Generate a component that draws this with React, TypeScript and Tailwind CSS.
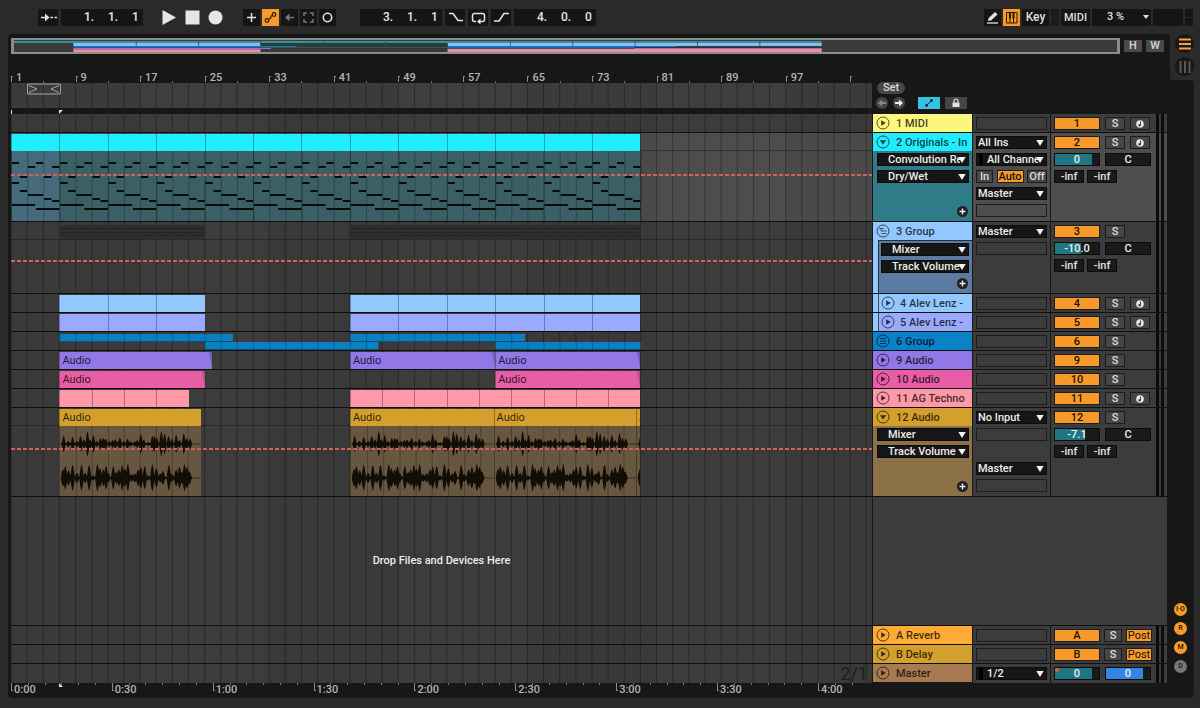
import { useState } from "react";
import type { ReactNode } from "react";
import clsx from "clsx";

const VIEW_BARS = 106.7;
const bar = (value: number) => `${(value / VIEW_BARS) * 100}%`;

type Clip = { start: number; end: number; label?: string; fade?: boolean };

type Track = {
  id: string;
  name: string;
  color: string;
  body?: string;
  icon: "play" | "down" | "group" | "stack";
  height?: string;
  child?: boolean;
  clips?: Clip[];
  devices?: string[];
  io?: ReactNode;
  arm?: boolean;
  volume?: { value: string; fill: number };
  automation?: string;
  selected?: boolean;
  content?: ReactNode;
};

/* ---------- shared pieces ---------- */

function Arrow() {
  return (
    <svg className="pointer-events-none absolute top-[3px] right-[2px] h-[6px] w-2" viewBox="0 0 8 6">
      <path d="M0.3 0h7.4L4 6z" fill="#f2f2f2" />
    </svg>
  );
}

function Dropdown({ value, label, indent, marks }: { value: string; label: string; indent?: boolean; marks?: boolean }) {
  return (
    <div className="relative h-[13px] border border-[#0c0c0c] bg-[#161616] pr-2">
      <select
        aria-label={label}
        className={clsx(
          "block h-[11px] w-full appearance-none overflow-hidden bg-transparent text-[11px] leading-[11px] font-medium text-[#ececec] outline-none",
          indent ? "pl-[10px]" : "pl-[1px]"
        )}
        defaultValue={value}
      >
        <option>{value}</option>
      </select>
      {marks ? <span className="absolute top-0 left-[2px] h-full w-1 bg-black" /> : null}
      <Arrow />
    </div>
  );
}

function Slot() {
  return <div className="h-[13px] border border-[#1c1c1c]" />;
}

function Gap() {
  return <div className="h-[13px]" />;
}

function GridLines() {
  const lines = Array.from({ length: 54 }, (_, i) => i * 2);
  return (
    <svg className="pointer-events-none absolute inset-0 h-full w-full">
      {[16, 48, 80].map((start) => (
        <rect key={start} x={bar(start)} width={bar(16)} height="100%" fill="#fff" opacity="0.02" />
      ))}
      {lines.map((line) => (
        <line key={line} x1={bar(line)} x2={bar(line)} y1="0" y2="100%" stroke="#000" strokeWidth="1" opacity="0.3" />
      ))}
    </svg>
  );
}

function TrackIcon({ kind }: { kind: Track["icon"] }) {
  return (
    <svg className="h-[14px] w-[14px] shrink-0" viewBox="0 0 14 14" fill="none" stroke="#000" strokeOpacity="0.65">
      <circle cx="7" cy="7" r="6" />
      {kind === "play" ? <path d="M5.2 4.2v5.6L9.8 7z" fill="#000" fillOpacity="0.75" stroke="none" /> : null}
      {kind === "down" ? <path d="M3.8 5.2h6.4L7 9.4z" fill="#000" fillOpacity="0.7" stroke="none" /> : null}
      {kind === "group" ? <path d="M3 4.5h5M5 7h5.5M5.5 9.5h5M5 4.5v2.5" strokeWidth="0.9" /> : null}
      {kind === "stack" ? <path d="M4 4.5h6M4 7h6M4 9.5h6" strokeWidth="0.9" /> : null}
    </svg>
  );
}

/* ---------- transport bar ---------- */

function Tool({ label, active, wide, children }: { label: string; active?: boolean; wide?: boolean; children: ReactNode }) {
  return (
    <button
      type="button"
      aria-label={label}
      className={clsx(
        "flex h-[17px] items-center justify-center",
        wide ? "w-5" : "w-[17px]",
        active ? "bg-[#f8992c] text-[#2a1a05]" : "bg-[#151515] text-[#e4e4e4]"
      )}
    >
      <svg className="h-[17px] w-[17px]" viewBox="0 0 17 17" fill="none" stroke="currentColor" strokeWidth="1.5">
        {children}
      </svg>
    </button>
  );
}

function Position({ label, values }: { label: string; values: string[] }) {
  return (
    <div className="flex h-[17px] w-[82px] items-center justify-end bg-[#151515] pr-[3px]">
      {values.map((value, i) => (
        <input
          key={i}
          aria-label={`${label} ${i + 1}`}
          className={clsx("bg-transparent text-xs font-medium text-[#e6e6e6] outline-none", i < 2 ? "w-6" : "w-2")}
          defaultValue={value}
        />
      ))}
    </div>
  );
}

function Transport() {
  return (
    <header className="flex h-[34px] items-center pr-[7px] pl-[38px]">
      <div className="flex gap-[3px]">
        <Tool label="Follow" wide>
          <path d="M1 8.5h6M10.500 8.5h2.500M14.500 8.5h2.500" />
          <path d="M5 4.500v8l4.500-4z" fill="currentColor" stroke="none" />
        </Tool>
        <Position label="Position" values={["1.", "1.", "1"]} />
      </div>
      <div className="ml-[19px] flex items-center gap-2 text-[#e6e6e6]">
        <button type="button" aria-label="Play">
          <svg className="h-[15px] w-[15px]" viewBox="0 0 15 15"><path d="M0.500 0v15L14 7.500z" fill="currentColor" /></svg>
        </button>
        <button type="button" aria-label="Stop">
          <svg className="h-[15px] w-[15px]" viewBox="0 0 15 15"><path d="M0.500 0.500h14v14h-14z" fill="currentColor" /></svg>
        </button>
        <button type="button" aria-label="Record">
          <svg className="h-[15px] w-[15px]" viewBox="0 0 15 15"><circle cx="7.500" cy="7.500" r="7" fill="currentColor" /></svg>
        </button>
      </div>
      <div className="ml-5 flex gap-[2px]">
        <Tool label="Overdub"><path d="M8.500 4v9M4 8.500h9" /></Tool>
        <Tool label="Automation arm" active>
          <g strokeWidth="1.200">
            <circle cx="5" cy="11.500" r="1.800" />
            <circle cx="12" cy="5.500" r="1.800" />
            <path d="M6.500 10.500C8 9 9 10 8.800 8.500S9.500 6.500 10.500 6.500" />
          </g>
        </Tool>
        <Tool label="Re-enable automation">
          <g stroke="#777"><path d="M7 8.500h6" /><path d="M8.500 4.500v8L4 8.500z" fill="#777" stroke="none" /></g>
        </Tool>
        <Tool label="Capture">
          <path d="M4 7V4h3M10 4h3v3M13 10v3h-3M7 13H4v-3" stroke="#777" />
        </Tool>
        <Tool label="Session record"><circle cx="8.500" cy="8.500" r="4.200" /></Tool>
      </div>
      <div className="ml-6 flex gap-[3px]">
        <Position label="Loop start" values={["3.", "1.", "1"]} />
        <Tool label="Punch in" wide><path d="M2 4.500h4l5 7h5" strokeLinejoin="round" /></Tool>
        <Tool label="Loop" wide>
          <path d="M6 12.500H4.500a2 2 0 0 1-2-2v-4a2 2 0 0 1 2-2h8a2 2 0 0 1 2 2v4a2 2 0 0 1-2 2H10" />
          <path d="M10.500 9.500v6L7 12.500z" fill="currentColor" stroke="none" />
        </Tool>
        <Tool label="Punch out" wide><path d="M1 12h5l5-7.500h5" strokeLinejoin="round" /></Tool>
        <Position label="Loop length" values={["4.", "0.", "0"]} />
      </div>
      <div className="ml-auto flex gap-[2px] text-xs font-medium text-[#dedede]">
        <Tool label="Draw mode">
          <path d="M3 14h11" strokeWidth="1.300" />
          <path d="M4 12l0.700-3L11 3l2.500 2.500L7 11.500z" fill="currentColor" stroke="none" />
        </Tool>
        <Tool label="Computer keyboard" active>
          <g strokeWidth="1">
            <path d="M3.500 3.500h10.500v10.500H3.500zM7 9v5M10.500 9v5" />
            <path d="M7 3.500v6M10.500 3.500v6" strokeWidth="2" />
          </g>
        </Tool>
        <button type="button" className="h-[17px] w-[27px] bg-[#151515] text-center leading-[17px]">Key</button>
        <div className="flex w-2 flex-col gap-px"><span className="flex-1 bg-[#1b1b1b]" /><span className="flex-1 bg-[#1b1b1b]" /></div>
        <button type="button" className="h-[17px] w-[29px] bg-[#151515] text-center text-[11px] leading-[17px]">MIDI</button>
        <button type="button" className="flex h-[17px] w-[59px] items-center bg-[#151515] pl-[15px] text-[11px]">
          3 %
          <svg className="mr-[2px] ml-auto h-[4px] w-[6px]" viewBox="0 0 6 4"><path d="M0 0h6L3 4z" fill="#ddd" /></svg>
        </button>
        <div className="h-[17px] w-[30px] bg-[#151515]" />
        <div className="flex w-2 flex-col gap-px"><span className="flex-1 bg-[#151515]" /><span className="flex-1 bg-[#151515]" /></div>
      </div>
    </header>
  );
}

/* ---------- overview and rulers ---------- */

const overview = [
  { s: 0, e: 78, y: 2, h: 1, c: "#1f4a4e" },
  { s: 0, e: 78, y: 3, h: 2, c: "#3a9095" },
  { s: 6, e: 24, y: 5, h: 3, c: "#93b8f0" },
  { s: 42, e: 78, y: 5, h: 3, c: "#93b8f0" },
  { s: 24, e: 42, y: 5, h: 6, c: "#2b3b37" },
  { s: 24, e: 42, y: 9, h: 1, c: "#35584d" },
  { s: 6, e: 27.5, y: 8, h: 1, c: "#1478b8" },
  { s: 6, e: 24, y: 9, h: 1, c: "#155c9c" },
  { s: 42, e: 64, y: 8, h: 1, c: "#1478b8" },
  { s: 42, e: 60, y: 9, h: 1, c: "#1c62c0" },
  { s: 60, e: 78, y: 9, h: 1, c: "#143a60" },
  { s: 6, e: 25, y: 10, h: 1, c: "#8d6fe0" },
  { s: 42, e: 60, y: 10, h: 1, c: "#3450a8" },
  { s: 60, e: 78, y: 10, h: 1, c: "#a468d8" },
  { s: 6, e: 24, y: 11, h: 1, c: "#d068a8" },
  { s: 6, e: 24, y: 12, h: 2, c: "#f09080" },
  { s: 42, e: 78, y: 11, h: 3, c: "#ee918e" }
];

function Overview() {
  return (
    <div className="flex gap-1 pr-[3px]">
      <div className="relative h-4 flex-1 bg-[#3a3a3a]">
        <svg className="block h-4 w-full">
          {overview.map((o, i) => (
            <rect key={i} x={bar(o.s)} width={bar(o.e - o.s)} y={o.y} height={o.h} fill={o.c} />
          ))}
          {[12, 18, 24, 30, 36, 48, 54, 60, 66, 72].map((b) => (
            <rect key={b} x={bar(b)} width="1" y="3" height="5" fill="#245060" opacity="0.8" />
          ))}
        </svg>
        <div className="absolute inset-0 border-2 border-x-[3px] border-[#8b8b8b]" />
      </div>
      {["H", "W"].map((key) => (
        <button key={key} type="button" className="my-[2px] h-3 w-[18px] bg-[#4a4a4a] text-center text-[11px] leading-3 font-semibold text-[#cfcfcf]">
          {key}
        </button>
      ))}
    </div>
  );
}

function BeatRuler() {
  const ticks = Array.from({ length: 14 }, (_, i) => i * 8);
  return (
    <div className="relative h-[29px] overflow-hidden text-[11px] leading-[11px] font-medium text-[#b4b4b4]">
      {ticks.map((t) => (
        <div key={t} className="absolute bottom-0 flex h-[11px]" style={{ left: bar(t) }}>
          <span className="mt-1 mr-[3px] h-[6px] w-[2px] border-t border-l border-[#8a8a8a]" />
          {t < 100 ? t + 1 : null}
        </div>
      ))}
      {ticks.map((t) => (
        <span key={t} className="absolute bottom-0 h-[2px] w-px bg-[#777]" style={{ left: bar(t + 4) }} />
      ))}
    </div>
  );
}

function TimeRuler() {
  const marks = ["0:00", "0:30", "1:00", "1:30", "2:00", "2:30", "3:00", "3:30", "4:00"];
  const small = Array.from({ length: 51 }, (_, i) => (i * 12.5) / 6);
  return (
    <div className="relative h-[15px] overflow-hidden text-[11px] leading-[13px] font-medium text-[#b4b4b4]">
      {small.map((t) => (
        <span key={t} className="absolute top-0 h-[2px] w-px bg-[#777]" style={{ left: bar(t) }} />
      ))}
      {marks.map((mark, i) => (
        <div key={mark} className="absolute top-0 flex" style={{ left: bar(i * 12.5) }}>
          <span className="mr-px h-2 w-[2px] border-b border-l border-[#8a8a8a]" />
          {mark}
        </div>
      ))}
      <svg className="absolute top-0 h-1 w-1" style={{ left: bar(6) }} viewBox="0 0 4 4"><path d="M0 0l4 4H0z" fill="#cfe9dc" /></svg>
    </div>
  );
}

function RulerSection() {
  return (
    <div className="flex">
      <div className="min-w-0 flex-1">
        <BeatRuler />
        <div className="relative h-[25px] bg-[#3b3b3b]">
          <GridLines />
          <div className="absolute top-0 h-3" style={{ left: bar(2), width: bar(4.2) }}>
            <svg className="h-3 w-full" viewBox="0 0 34 12" preserveAspectRatio="none" fill="none" stroke="#a8a8a8">
              <path d="M0.500 1h33v10h-33zM2 2.500l8 3.500-8 3.500M32 2.500L24 6l8 3.500" />
            </svg>
          </div>
        </div>
        <div className="relative h-[6px]">
          <span className="absolute top-[2px] left-0 h-[4px] w-px bg-[#cfe9dc]" />
          <svg className="absolute top-[2px] h-1 w-1" style={{ left: bar(6) }} viewBox="0 0 4 4"><path d="M0 0h4L0 4z" fill="#cfe9dc" /></svg>
        </div>
      </div>
      <div className="w-[295px] pt-7 pl-1">
        <button type="button" className="ml-[1px] block h-3 w-7 rounded-full bg-[#464646] text-center text-[11px] leading-3 font-medium text-[#d8d8d8]">Set</button>
        <div className="mt-[3px] flex items-center gap-[5px]">
          <button type="button" aria-label="Previous locator" className="h-3 w-3 rounded-full bg-[#464646]">
            <svg className="h-3 w-3" viewBox="0 0 12 12"><path d="M2 6l4-3.500V5h4v2H6v2.500z" fill="#8a8a8a" /></svg>
          </button>
          <button type="button" aria-label="Next locator" className="h-3 w-3 rounded-full bg-[#464646]">
            <svg className="h-3 w-3" viewBox="0 0 12 12"><path d="M10 6L6 2.500V5H2v2h4v2.500z" fill="#f0f0f0" /></svg>
          </button>
          <button type="button" aria-label="Automation mode" className="ml-2 flex h-3 w-[22px] justify-center bg-[#37c3e0]">
            <svg className="h-3 w-3" viewBox="0 0 12 12" stroke="#07272e"><path d="M3 8.500l6-5" /><circle cx="3.500" cy="8.500" r="1" fill="#07272e" /><circle cx="8.500" cy="3.500" r="1" fill="#07272e" /></svg>
          </button>
          <button type="button" aria-label="Lock envelopes" className="flex h-3 w-[22px] justify-center bg-[#464646]">
            <svg className="h-3 w-3" viewBox="0 0 12 12"><path d="M2.500 5.500h7V10h-7z" fill="#e2e2e2" /><path d="M4 5.500V4a2 2 0 0 1 4 0v1.500" fill="none" stroke="#e2e2e2" strokeWidth="1.200" /></svg>
          </button>
        </div>
      </div>
    </div>
  );
}

/* ---------- clips ---------- */

const span = (from: number, to: number, step: number): Clip[] => {
  const out: Clip[] = [];
  for (let s = from; s < to; s += step) out.push({ start: s, end: Math.min(s + step, to) });
  return out;
};

function ClipBlocks({ clips, color }: { clips: Clip[]; color: string }) {
  return clips.map((clip) => (
    <div
      key={clip.start}
      className="absolute top-px h-[17px] overflow-hidden border-l border-black/30 pl-[2px] text-[11px] leading-[17px] text-black/80"
      style={{ left: bar(clip.start), width: bar(clip.end - clip.start), backgroundColor: color }}
    >
      {clip.label}
      {clip.fade ? (
        <svg className="absolute top-0 right-0 h-full w-[3px]" viewBox="0 0 3 17"><path d="M0 0h3v17z" fill="#000" opacity="0.2" /></svg>
      ) : null}
    </div>
  ));
}

// start bar, length in bars, y inside the clip body
const notes = [
  [0, 1, 11], [3, 1, 11], [2, 1, 15], [5, 1, 15], [1, 1, 25], [4, 1, 25], [0, 1, 31],
  [1, 1, 39], [2, 2, 43], [4, 1, 47], [5, 1, 49], [0, 3, 53], [3, 3, 57]
];

function MidiLane() {
  const loops = Array.from({ length: 13 }, (_, i) => i * 6);
  return (
    <svg className="absolute top-[18px] left-0 h-[70px] w-full">
      <rect width={bar(78)} height="70" fill="#3a5f65" />
      <rect width={bar(6)} height="70" fill="#456a7b" />
      {Array.from({ length: 40 }, (_, i) => (
        <rect key={i} x={bar(i * 2)} width="1" height="70" fill="#000" opacity={i % 3 ? 0.25 : 0.45} />
      ))}
      {loops.map((loop) =>
        notes.map(([start, length, y]) => (
          <rect key={`${loop}-${start}-${y}`} x={bar(loop + start + 0.1)} width={bar(length - 0.1)} y={y} height="2" fill="#060c0d" />
        ))
      )}
    </svg>
  );
}

// x position and amplitude of each transient
const upper = [
  [11, 25], [25, 10], [38, 21], [51, 10], [62, 24], [72, 14], [83, 39], [91, 14], [101, 27], [111, 9], [122, 18], [131, 18],
  [138, 16], [149, 9], [159, 12], [167, 14], [176, 9], [181, 19], [193, 9], [204, 16], [213, 8], [226, 8], [233, 12], [244, 30],
  [253, 14], [266, 6], [279, 24], [286, 24], [293, 18], [306, 39], [316, 32], [328, 24], [338, 15], [351, 28], [361, 12], [374, 32], [383, 18], [393, 16]
];
const lower = [
  [9, 27], [16, 36], [26, 24], [38, 40], [51, 16], [65, 40], [76, 16], [88, 40], [99, 8], [113, 42], [121, 30], [131, 26],
  [139, 36], [146, 14], [161, 36], [171, 18], [178, 26], [188, 40], [196, 28], [205, 42], [216, 12], [226, 14], [236, 26], [244, 34],
  [256, 36], [266, 8], [279, 42], [291, 30], [303, 14], [311, 22], [329, 40], [338, 12], [351, 26], [361, 34], [369, 18], [376, 42], [384, 34], [391, 20]
];

function wave(peaks: number[][], center: number, reach: number) {
  const size = (x: number) => {
    if (x > 398 || x < 4) return 1;
    return Math.max(3, ...peaks.map(([p, a]) => a * (1 - (Math.abs(x - p) / reach) ** 1.5)));
  };
  const xs = Array.from({ length: 426 }, (_, i) => i);
  const top = xs.map((x) => `${x} ${center - size(x)}`);
  const bottom = xs.reverse().map((x) => `${x} ${center + size(x) * 0.95}`);
  return `M${top.join("L")}L${bottom.join("L")}Z`;
}

const upperPath = wave(upper, 54, 6);
const lowerPath = wave(lower, 156, 7);

function AudioLane() {
  const clips = [
    { start: 6, end: 23.6 },
    { start: 42, end: 59.8 },
    { start: 59.8, end: 77.5 },
    { start: 77.5, end: 78 }
  ];
  return clips.map((clip) => (
    <div
      key={clip.start}
      className="absolute top-[18px] h-[70px] overflow-hidden border-l border-black/30 bg-[#675640]"
      style={{ left: bar(clip.start), width: bar(clip.end - clip.start) }}
    >
      <svg className="h-full w-full" viewBox="0 0 426 210" preserveAspectRatio={clip.start > 77 ? "xMinYMid slice" : "none"}>
        {[48, 96, 145, 193, 241, 290, 338, 386].map((x) => (
          <rect key={x} x={x} width="3" height="210" fill="#000" opacity="0.25" />
        ))}
        <path d={upperPath} fill="#120d06" />
        <path d={lowerPath} fill="#120d06" />
      </svg>
    </div>
  ));
}

function GroupShadow() {
  return [[6, 24], [42, 78]].map(([start, end]) => (
    <div
      key={start}
      className="absolute top-[3px] flex h-[14px] flex-col gap-px bg-[#242424]"
      style={{ left: bar(start), width: bar(end - start) }}
    >
      {[0, 1, 2, 3].map((i) => <span key={i} className="flex-1 bg-[#2e2e2e]" />)}
    </div>
  ));
}

function NestedGroup() {
  const parts = [
    { s: 6, e: 27.5, y: 2 },
    { s: 42, e: 63.7, y: 2 },
    { s: 24, e: 45.5, y: 10 },
    { s: 60, e: 78, y: 10 }
  ];
  return (
    <svg className="absolute inset-0 h-full w-full">
      {parts.map((p) => (
        <g key={p.s}>
          <rect x={bar(p.s)} width={bar(p.e - p.s)} y={p.y} height="7" fill="#0a80c2" />
          <rect x={bar(p.s)} width={bar(p.e - p.s)} y={p.y + 7} height="1" fill="#07507a" />
          {Array.from({ length: Math.ceil((p.e - p.s) / 2) }, (_, i) => (
            <rect key={i} x={bar(p.s + i * 2)} width="1" y={p.y} height="7" fill="#000" opacity="0.25" />
          ))}
        </g>
      ))}
    </svg>
  );
}

/* ---------- track rows ---------- */

const tracks: Track[] = [
  { id: "1", name: "1 MIDI", color: "#fbf77e", icon: "play", arm: true },
  {
    id: "2", name: "2 Originals - In", color: "#20edff", body: "#2f7c88", icon: "down", height: "h-[89px]", selected: true, arm: true,
    clips: span(0, 78, 6), devices: ["Convolution Reverb", "Dry/Wet"], automation: "top-[41px]", content: <MidiLane />,
    volume: { value: "0", fill: 84 },
    io: (
      <>
        <Dropdown label="Input type" value="All Ins" />
        <Dropdown label="Input channel" value="All Channels" indent marks />
        <Monitor />
        <Dropdown label="Output" value="Master" />
        <Slot />
      </>
    )
  },
  {
    id: "3", name: "3 Group", color: "#92c8ff", body: "#5c7ba3", icon: "group", height: "h-[72px]", devices: ["Mixer", "Track Volume"],
    automation: "top-[38px]", content: <GroupShadow />, volume: { value: "-10.0", fill: 60 },
    io: (
      <>
        <Dropdown label="Output" value="Master" />
        <Slot />
      </>
    )
  },
  { id: "4", name: "4 Alev Lenz -", color: "#92c8ff", icon: "play", child: true, arm: true, clips: [...span(6, 24, 6), ...span(42, 78, 6)] },
  { id: "5", name: "5 Alev Lenz -", color: "#9ba9ff", icon: "play", child: true, arm: true, clips: [...span(6, 24, 6), ...span(42, 78, 6)] },
  { id: "6", name: "6 Group", color: "#0a82c6", icon: "stack", content: <NestedGroup /> },
  {
    id: "9", name: "9 Audio", color: "#9277e6", icon: "play",
    clips: [{ start: 6, end: 24.9, label: "Audio", fade: true }, { start: 42, end: 60, label: "Audio", fade: true }, { start: 60, end: 78, label: "Audio", fade: true }]
  },
  {
    id: "10", name: "10 Audio", color: "#e85ea6", icon: "play",
    clips: [{ start: 6, end: 24, label: "Audio", fade: true }, { start: 60, end: 78, label: "Audio", fade: true }]
  },
  { id: "11", name: "11 AG Techno", color: "#ff99a7", icon: "play", arm: true, clips: [...span(6, 22, 4), ...span(42, 78, 4)] },
  {
    id: "12", name: "12 Audio", color: "#d3a02d", body: "#8c7148", icon: "down", height: "h-[89px]", devices: ["Mixer", "Track Volume"],
    automation: "top-10", content: <AudioLane />, volume: { value: "-7.1", fill: 68 },
    clips: [{ start: 6, end: 23.6, label: "Audio" }, { start: 42, end: 59.8, label: "Audio" }, { start: 59.8, end: 77.5, label: "Audio" }, { start: 77.5, end: 78, label: "A" }],
    io: (
      <>
        <Dropdown label="Input" value="No Input" />
        <Slot />
        <Gap />
        <Dropdown label="Output" value="Master" />
        <Slot />
      </>
    )
  }
];

const returns: Track[] = [
  { id: "A", name: "A Reverb", color: "#ffab35", icon: "play" },
  { id: "B", name: "B Delay", color: "#d3a02d", icon: "play" }
];

function Monitor() {
  return (
    <div className="flex h-[13px] justify-between text-[11px] leading-[11px] font-medium text-[#dcdcdc]">
      <button type="button" className="w-[17px] border border-[#1c1c1c] bg-[#464646]">In</button>
      <button type="button" className="w-[27px] border border-[#1c1c1c] bg-[#f8992c] text-[#1a1205]">Auto</button>
      <button type="button" className="w-5 border border-[#1c1c1c] bg-[#464646]">Off</button>
    </div>
  );
}

function Header({ track }: { track: Track }) {
  const grouped = track.child || track.id === "3";
  return (
    <div className={clsx("flex w-[99px] shrink-0 flex-col", track.child && "pl-[5px]")} style={{ backgroundColor: grouped ? "#92c8ff" : track.body }}>
      <div
        className={clsx("flex h-[18px] items-center overflow-hidden text-[11px] font-medium whitespace-nowrap text-black/75", track.child ? "gap-[5px] border-l border-black/60 pl-[2px]" : "gap-[6px] pl-[3px]")}
        style={{ backgroundColor: track.color }}
      >
        <TrackIcon kind={track.icon} />
        <span className="pt-[2px]">{track.name}</span>
      </div>
      {track.devices ? (
        <div
          className={clsx("flex flex-1 flex-col gap-1 pt-[2px] pr-[3px]", track.id === "3" ? "ml-[5px] border-t border-l border-black/60 pl-[2px]" : "pl-1")}
          style={{ backgroundColor: track.body }}
        >
          {track.devices.map((device) => (
            <Dropdown key={device} label={`${track.name} ${device}`} value={device} indent />
          ))}
          <button type="button" aria-label="Add lane" className="mt-auto mb-1 self-end">
            <svg className="h-[11px] w-3" viewBox="0 0 12 11"><circle cx="5.500" cy="5.500" r="5.500" fill="#202020" /><path d="M5.500 2.500v6M2.500 5.500h6" stroke="#f0f0f0" strokeWidth="1.400" /></svg>
          </button>
        </div>
      ) : null}
    </div>
  );
}

function Meter() {
  return (
    <div className="ml-auto flex gap-[2px] pr-[3px]">
      <span className="w-[3px] bg-[#0b0b0b]" />
      <span className="w-[3px] bg-[#0b0b0b]" />
    </div>
  );
}

function Fader({ value, fill, color = "#1f7783", label }: { value: string; fill: number; color?: string; label: string }) {
  return (
    <input
      aria-label={label}
      className="h-[13px] w-[46px] border border-[#0c0c0c] text-center text-[11px] leading-[11px] font-medium text-[#f0f0f0] outline-none"
      defaultValue={value}
      style={{ background: `linear-gradient(90deg, ${color} ${fill}%, #1a1a1a ${fill}%)` }}
    />
  );
}

const smallButton = "h-[13px] border border-[#1c1c1c] bg-[#464646] text-center text-[11px] leading-[11px] font-medium text-[#dcdcdc]";

function Mixer({ track, post }: { track: Track; post?: boolean }) {
  const [on, setOn] = useState(true);
  return (
    <div className={clsx("flex w-[116px] shrink-0 pl-[3px]", track.selected ? "bg-[#4e4e4e]" : "bg-[#3c3c3c]")}>
      <div className="flex flex-col gap-1 pt-[3px]">
        <div className={clsx("flex", post ? "gap-1" : "gap-[5px]")}>
          <button
            type="button"
            aria-pressed={on}
            onClick={() => setOn(!on)}
            className={clsx("h-[13px] w-[46px] border border-[#1c1c1c] text-center text-[11px] leading-[11px] font-medium", on ? "bg-[#f8992c] text-[#1a1205]" : "bg-[#464646] text-[#dcdcdc]")}
          >
            {track.id}
          </button>
          <button type="button" className={clsx(smallButton, post ? "w-[18px]" : "w-5")}>S</button>
          {post ? (
            <button type="button" className="h-[13px] w-[26px] border border-[#1c1c1c] bg-[#f8992c] text-center text-[11px] leading-[11px] text-[#1a1205]">Post</button>
          ) : null}
          {track.arm ? (
            <button type="button" aria-label="Arm" className={clsx(smallButton, "flex w-5 items-center justify-center")}>
              <svg className="h-2 w-2" viewBox="0 0 8 8"><circle cx="4" cy="4" r="3.800" fill="#e8e8e8" /><path d="M4.500 1.500v3.500" stroke="#444" /><circle cx="3.600" cy="5.200" r="1.200" fill="#444" /></svg>
            </button>
          ) : null}
        </div>
        {track.volume ? (
          <>
            <div className="flex gap-[5px]">
              <Fader label="Volume" value={track.volume.value} fill={track.volume.fill} />
              <Fader label="Pan" value="C" fill={0} />
            </div>
            <div className="flex gap-[3px] text-[11px] leading-[11px] font-medium text-[#e4e4e4]">
              {[0, 1].map((i) => <span key={i} className="h-[13px] w-[30px] border border-[#0c0c0c] bg-[#1a1a1a] text-center">-inf</span>)}
            </div>
          </>
        ) : null}
      </div>
      <Meter />
    </div>
  );
}

function TrackRow({ track, post }: { track: Track; post?: boolean }) {
  return (
    <div className={clsx("flex gap-px border-b border-[#101010]", track.height ?? "h-[19px]")}>
      <div className={clsx("relative min-w-0 flex-1 overflow-hidden", track.selected ? "bg-[#4a4a4a]" : "bg-[#393939]")}>
        <GridLines />
        {track.height ? <div className="absolute top-[17px] h-px w-full bg-black/30" /> : null}
        {track.clips ? <ClipBlocks clips={track.clips} color={track.color} /> : null}
        {track.content}
        {track.automation ? (
          <svg className={clsx("absolute left-0 h-[2px] w-full", track.automation)}>
            <line x1="0" x2="100%" y1="1" y2="1" stroke="#c9645b" strokeWidth="2" strokeDasharray="4 2" />
          </svg>
        ) : null}
      </div>
      <Header track={track} />
      <div className={clsx("flex w-[77px] shrink-0 flex-col gap-1 px-[3px] pt-[3px]", track.selected ? "bg-[#4e4e4e]" : "bg-[#3c3c3c]")}>
        {track.io ?? <Slot />}
      </div>
      <Mixer track={track} post={post} />
    </div>
  );
}

function MasterRow() {
  return (
    <div className="flex h-[19px] gap-px">
      <div className="relative min-w-0 flex-1 bg-[#393939]">
        <GridLines />
        <span className="absolute right-1 bottom-0 text-lg leading-[19px] text-[#1d1d1d]">2/1</span>
      </div>
      <Header track={{ id: "M", name: "Master", color: "#a87a52", icon: "play" }} />
      <div className="w-[77px] shrink-0 bg-[#3c3c3c] px-[3px] pt-[3px]">
        <Dropdown label="Cue out" value="1/2" indent marks />
      </div>
      <div className="flex w-[116px] shrink-0 bg-[#3c3c3c] pl-[3px]">
        <div className="relative flex gap-[5px] pt-[3px]">
          <Fader label="Master volume" value="0" fill={84} />
          <Fader label="Cue volume" value="0" fill={84} color="#3586e4" />
          <span className="absolute top-1 left-px h-1 w-1 rounded-full bg-[#e0604c]" />
        </div>
        <Meter />
      </div>
    </div>
  );
}

function DropArea() {
  return (
    <div className="flex min-h-24 flex-1 gap-px border-b border-[#101010]">
      <div className="relative flex flex-1 items-center justify-center bg-[#393939] text-[11px] font-medium text-[#ececec]">
        <GridLines />
        <p className="relative">Drop Files and Devices Here</p>
      </div>
      <div className="w-[294px] bg-[#3c3c3c]" />
    </div>
  );
}

function Rail() {
  return (
    <div className="flex w-[23px] flex-col">
      <div className="-ml-px flex h-[46px] flex-col items-end gap-1 rounded-bl bg-[#2a2a2a]">
        <button type="button" aria-label="Arrangement view" className="flex h-[19px] w-[19px] items-center justify-center rounded-full bg-[#171717]">
          <svg className="h-3 w-3" viewBox="0 0 12 12"><path d="M0 1.500h12M0 6h12M0 10.500h12" stroke="#f8a03a" strokeWidth="2.200" /></svg>
        </button>
        <button type="button" aria-label="Session view" className="flex h-[19px] w-[19px] items-center justify-center rounded-full bg-[#171717]">
          <svg className="h-3 w-3" viewBox="0 0 12 12"><path d="M1.500 0v12M6 0v12M10.500 0v12" stroke="#5a5a5a" strokeWidth="2" /></svg>
        </button>
      </div>
      <div className="flex flex-1 flex-col items-start justify-end gap-[6px] rounded-r bg-[#171717] pb-[25px] pl-[3px]">
        {["I·O", "R", "M", "D"].map((key) => (
          <button
            key={key}
            type="button"
            className={clsx("h-[13px] w-[13px] rounded-full text-center text-[7px] leading-[13px] font-semibold text-[#2a1a05]", key === "D" ? "bg-[#767676]" : "bg-[#f8992c]")}
          >
            {key}
          </button>
        ))}
      </div>
    </div>
  );
}

export default function App() {
  return (
    <div className="flex min-h-screen flex-col bg-[#2a2a2a] font-['Roboto','Liberation_Sans',sans-serif]">
      <Transport />
      <main className="mr-[6px] mb-[10px] ml-2 flex flex-1">
        <div className="flex min-w-0 flex-1 flex-col rounded bg-[#171717] pt-1 pr-1 pl-[3px]">
          <Overview />
          <RulerSection />
          {tracks.map((track) => <TrackRow key={track.id} track={track} />)}
          <DropArea />
          {returns.map((track) => <TrackRow key={track.id} track={track} post />)}
          <MasterRow />
          <div className="pr-[295px]"><TimeRuler /></div>
        </div>
        <Rail />
      </main>
    </div>
  );
}
